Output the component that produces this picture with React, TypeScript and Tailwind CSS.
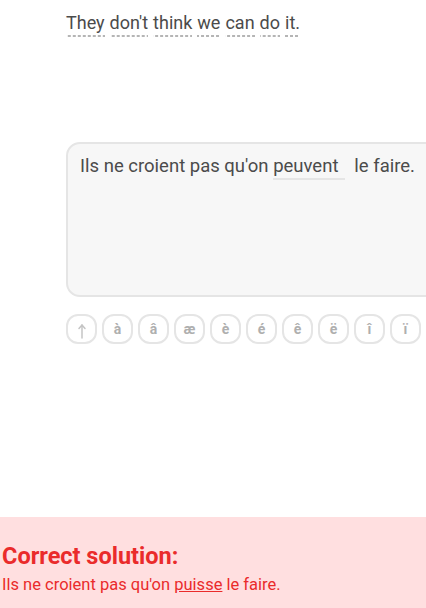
import React from "react";

const font = { fontFamily: "Roboto, 'Noto Sans', sans-serif" };

function UpArrow() {
  return (
    <svg width="10" height="16" viewBox="0 0 10 16" fill="none" stroke="#c4c4c4" strokeWidth="1.5" strokeLinecap="round" strokeLinejoin="round" className="mt-[3px]">
      <path d="M5 15V2" />
      <path d="M2 5.5L5 2l3 3.5" />
    </svg>
  );
}

export default function App() {
  const words = ["They", "don't", "think", "we", "can", "do", "it."];
  const keys = ["↑", "à", "â", "æ", "è", "é", "ê", "ë", "î", "ï"];
  return (
    <div className="w-[426px] h-[608px] bg-white overflow-hidden flex flex-col relative" style={font}>
      <div className="pl-[66px] pt-[11px] h-[142px]">
        <div className="flex gap-[5px] text-[18px] text-[#4b4b4b] leading-[24px]">
          {words.map((w, i) => (
            <span
              key={i}
              className="pb-[2px] bg-[linear-gradient(to_right,#b5b5b5_60%,transparent_0)] bg-[length:5px_2px] bg-repeat-x bg-bottom"
            >
              {w}
            </span>
          ))}
        </div>
      </div>
      <div className="pl-[66px]">
        <div className="w-[380px] h-[155px] bg-[#f7f7f7] border-2 border-[#e5e5e5] rounded-[14px] pl-[12px] pt-[10px]">
          <div className="text-[18.5px] text-[#4b4b4b] leading-[24px] flex items-baseline whitespace-pre">
            <span>Ils ne croient pas qu'on </span>
            <span className="border-b-2 border-[#e5e5e5] w-[72px] inline-block">peuvent</span>
            <span>  le faire.</span>
          </div>
        </div>
      </div>
      <div className="pl-[66px] pt-[17px] flex gap-[5px]">
        {keys.map((k, i) => (
          <div
            key={i}
            className="w-[31px] h-[30px] shrink-0 border-2 border-[#e5e5e5] rounded-[12px] flex items-center justify-center text-[#afafaf] font-bold text-[14px]"
          >
            {i === 0 ? <UpArrow /> : k}
          </div>
        ))}
      </div>
      <div className="flex-1" />
      <div className="h-[91px] bg-[#ffdfe0] pl-[2px] pt-[24px]">
        <div className="text-[23.5px] font-bold text-[#ea2b2b] leading-[30px]">Correct solution:</div>
        <div className="text-[16.5px] text-[#ea2b2b] leading-[22px] mt-[3px]">
          Ils ne croient pas qu'on <span className="underline">puisse</span> le faire.
        </div>
      </div>
    </div>
  );
}
